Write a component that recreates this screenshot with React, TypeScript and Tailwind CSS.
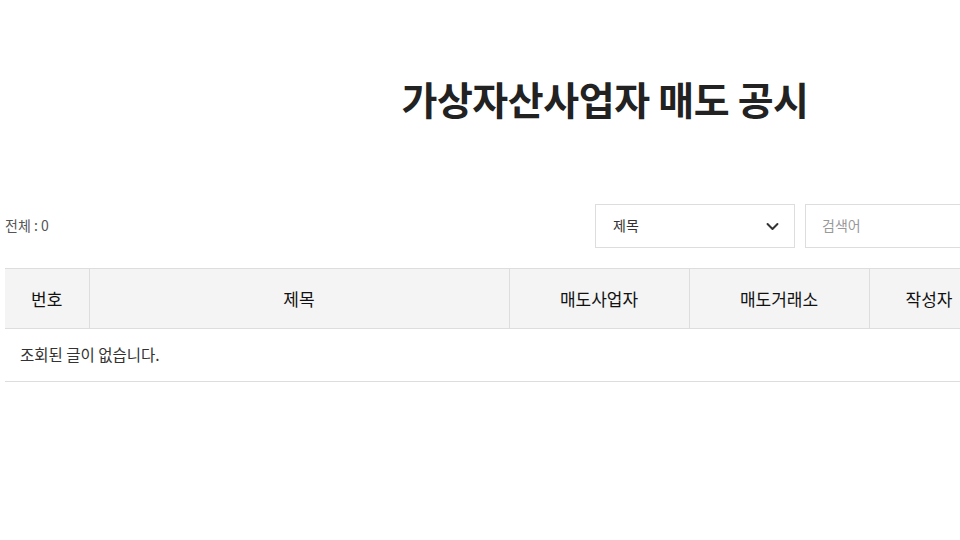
import React from 'react';

const columns = [
  { label: '번호', width: 'w-[84px]' },
  { label: '제목', width: 'w-[420px]' },
  { label: '매도사업자', width: 'w-[180px]' },
  { label: '매도거래소', width: 'w-[180px]' },
  { label: '작성자', width: 'w-[120px]' },
  { label: '등록일', width: 'w-[120px]' },
  { label: '조회수', width: 'w-[96px]' },
];

const App = () => {
  return (
    <div className="w-screen h-screen overflow-hidden bg-white font-['Noto_Sans_CJK_KR','Noto_Sans',sans-serif]">
      <div className="w-[1200px] ml-[5px] shrink-0">
        <h1 className="pt-[72px] text-center text-[39px] leading-[52px] font-bold text-[#222] tracking-[-0.4px]">
          가상자산사업자 매도 공시
        </h1>

        <div className="mt-[80px] flex items-center justify-between">
          <p className="text-[14px] leading-[20px] text-[#555] -mt-[2px]">전체 : 0</p>
          <div className="flex gap-[10px]">
            <div className="w-[200px] h-[44px] border border-[#ddd] flex items-center justify-between pl-[17px] pr-[13px]">
              <span className="text-[14px] text-[#333] -mt-[2px]">제목</span>
              <svg width="17" height="17" viewBox="0 0 24 24" fill="none" stroke="#333" strokeWidth="2.8" strokeLinecap="round" strokeLinejoin="round">
                <path d="M5 8.5l7 7 7-7" />
              </svg>
            </div>
            <input
              className="w-[290px] h-[44px] border border-[#ddd] px-[16px] pb-[2px] text-[14px] outline-none placeholder:text-[#999]"
              placeholder="검색어"
            />
            <button className="w-[100px] h-[44px] bg-[#222] text-white text-[14px]">검색</button>
          </div>
        </div>

        <table className="mt-[20px] w-full border-collapse table-fixed">
          <thead>
            <tr className="bg-[#f4f4f4] border-t border-b border-[#ddd]">
              {columns.map((col, i) => (
                <th
                  key={col.label}
                  className={`${col.width} h-[60px] text-[17px] font-normal text-[#111] ${i > 0 ? 'border-l border-[#ddd]' : ''}`}
                >
                  {col.label}
                </th>
              ))}
            </tr>
          </thead>
          <tbody>
            <tr className="border-b border-[#ddd]">
              <td colSpan={7} className="h-[53px] pl-[15px] text-[15.5px] text-[#333]">
                조회된 글이 없습니다.
              </td>
            </tr>
          </tbody>
        </table>
      </div>
    </div>
  );
};

export default App;
